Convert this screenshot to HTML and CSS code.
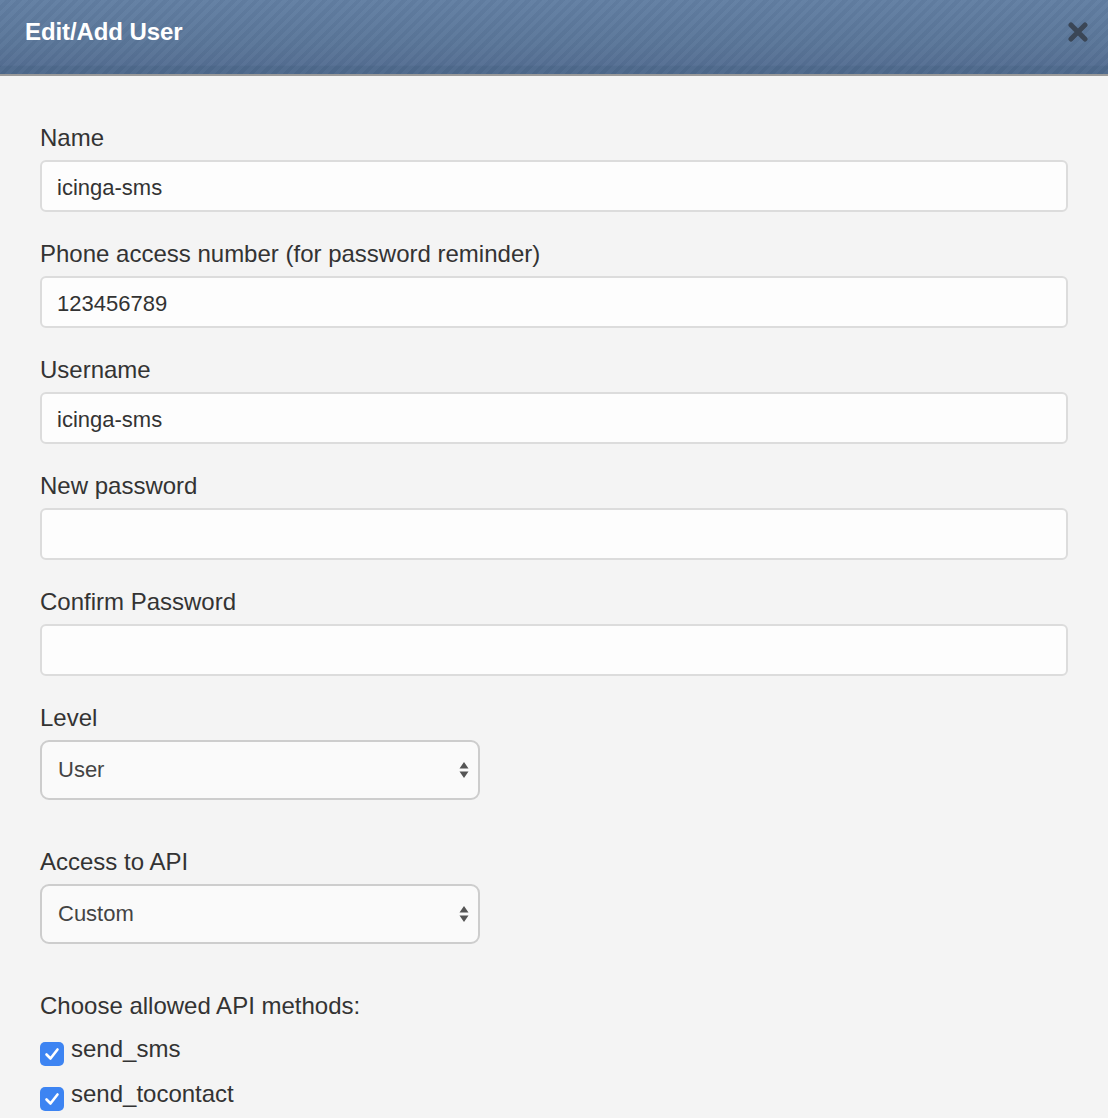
FILE: index.html
```html
<!DOCTYPE html>
<html>
<head>
<meta charset="utf-8">
<link rel="stylesheet" href="styles.css">
</head>
<body>
<div class="modal">
  <div class="modal-header">
    <h1 class="modal-title">Edit/Add User</h1>
    <span class="close">
      <svg width="20" height="20" viewBox="0 0 20 20"><path d="M3 3 L17 17 M17 3 L3 17" stroke="#37414f" stroke-width="5" stroke-linecap="round"/></svg>
    </span>
  </div>
  <div class="modal-body">
    <div class="field">
      <label class="label">Name</label>
      <div class="input">icinga-sms</div>
    </div>
    <div class="field">
      <label class="label">Phone access number (for password reminder)</label>
      <div class="input">123456789</div>
    </div>
    <div class="field">
      <label class="label">Username</label>
      <div class="input">icinga-sms</div>
    </div>
    <div class="field">
      <label class="label">New password</label>
      <div class="input"></div>
    </div>
    <div class="field">
      <label class="label">Confirm Password</label>
      <div class="input"></div>
    </div>
    <div class="field field-select">
      <label class="label">Level</label>
      <div class="select">User<span class="arrows"><svg width="10" height="20" viewBox="0 0 10 20"><path d="M5 2 L9.5 8.5 L0.5 8.5 Z M0.5 11.5 L9.5 11.5 L5 18 Z" fill="#555"/></svg></span></div>
    </div>
    <div class="field field-select">
      <label class="label">Access to API</label>
      <div class="select">Custom<span class="arrows"><svg width="10" height="20" viewBox="0 0 10 20"><path d="M5 2 L9.5 8.5 L0.5 8.5 Z M0.5 11.5 L9.5 11.5 L5 18 Z" fill="#555"/></svg></span></div>
    </div>
    <div class="field methods">
      <label class="label">Choose allowed API methods:</label>
      <div class="check"><span class="box"><svg width="24" height="24" viewBox="0 0 24 24"><path d="M6.5 12.5 L10.5 16.5 L17.5 7.5" fill="none" stroke="#fff" stroke-width="2.6" stroke-linecap="round" stroke-linejoin="round"/></svg></span>send_sms</div>
      <div class="check"><span class="box"><svg width="24" height="24" viewBox="0 0 24 24"><path d="M6.5 12.5 L10.5 16.5 L17.5 7.5" fill="none" stroke="#fff" stroke-width="2.6" stroke-linecap="round" stroke-linejoin="round"/></svg></span>send_tocontact</div>
    </div>
  </div>
</div>
</body>
</html>
```
FILE: styles.css
```css
html, body {
  margin: 0;
  padding: 0;
  background: #f4f4f4;
  font-family: "Liberation Sans", Arial, sans-serif;
  color: #333;
}
.modal {
  width: 1108px;
  height: 1118px;
  overflow: hidden;
}
.modal-header {
  height: 76px;
  box-sizing: border-box;
  border-bottom: 2px solid #9a9a9a;
  background:
    repeating-linear-gradient(-45deg, rgba(255,255,255,0.022) 0 4px, rgba(0,0,0,0.022) 4px 8px),
    linear-gradient(to bottom, #627fa3 0%, #5a7699 60%, #556f93 88%, #4e698c 90%, #4e698c 100%);
  display: flex;
  align-items: center;
  justify-content: space-between;
  padding: 0 20px 10px 25px;
}
.modal-title {
  margin: 0;
  color: #fff;
  font-size: 24px;
  font-weight: bold;
  letter-spacing: -0.1px;
}
.close {
  display: flex;
  opacity: 0.9;
}
.modal-body {
  padding: 48px 40px 0 40px;
}
.field {
  margin-bottom: 28px;
}
.label {
  display: block;
  font-size: 24px;
  line-height: 28px;
  margin-bottom: 8px;
  color: #333;
}
.input {
  height: 52px;
  box-sizing: border-box;
  border: 2px solid #dcdcdc;
  border-radius: 6px;
  background: #fdfdfd;
  padding: 2px 15px 0 15px;
  font-size: 22px;
  line-height: 48px;
  color: #333;
}
.field-select {
  margin-bottom: 48px;
}
.select {
  width: 440px;
  height: 60px;
  box-sizing: border-box;
  border: 2px solid #cdcdcd;
  border-radius: 9px;
  background: #fafafa;
  padding: 0 16px;
  font-size: 22px;
  line-height: 56px;
  color: #444;
  display: flex;
  justify-content: space-between;
  align-items: center;
}
.arrows {
  display: flex;
  margin-right: -7px;
}
.methods .label {
  margin-bottom: 15px;
}
.check {
  display: flex;
  align-items: flex-start;
  font-size: 24px;
  line-height: 28px;
  margin-bottom: 14px;
  color: #333;
}
.box {
  width: 24px;
  height: 24px;
  border-radius: 5px;
  background: #3d84f2;
  display: flex;
  margin-right: 7px;
  margin-top: 7px;
}
```
